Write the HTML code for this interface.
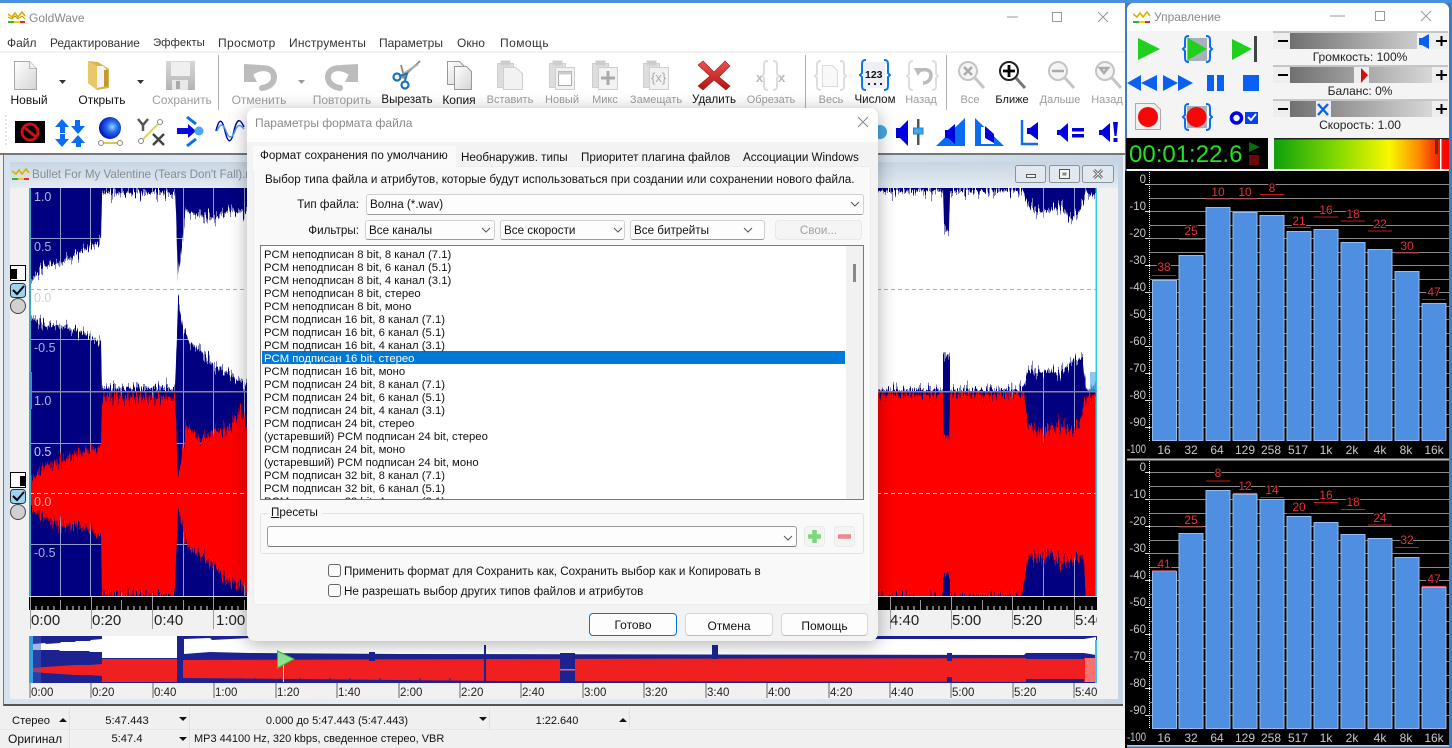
<!DOCTYPE html>
<html lang="ru">
<head>
<meta charset="utf-8">
<title>GoldWave</title>
<style>
html,body{margin:0;padding:0;width:1452px;height:748px;overflow:hidden;background:#4a8fd8;font-family:"Liberation Sans",sans-serif;font-size:12px;color:#111}
.a{position:absolute}
.t{position:absolute;white-space:nowrap;line-height:14px;height:14px}
.c{transform:translateX(-50%)}
.r{transform:translateX(-100%)}
.g{color:#9c9c9c}
svg{position:absolute;overflow:hidden;display:block}
.combo{position:absolute;background:#fdfdfd;border:1px solid #d0d0d0;border-bottom-color:#9a9a9a;border-radius:3px;box-sizing:border-box}
.btn{position:absolute;background:#fdfdfd;border:1px solid #d6d6d6;border-bottom-color:#bcbcbc;border-radius:4px;box-sizing:border-box;text-align:center;line-height:24px}
.li{position:absolute;left:3px;white-space:nowrap;line-height:13px;height:13px;font-size:11.3px}
.chk{position:absolute;width:13px;height:13px;border:1px solid #666;border-radius:3px;background:#fbfbfb;box-sizing:border-box}
.d{font-size:11.65px}
</style>
</head>
<body>
<!-- main window -->
<div class="a" style="left:0;top:3px;width:1125px;height:745px;background:#fff"></div>
<svg style="left:8px;top:11px" width="18" height="13" viewBox="0 0 18 13"><path d="M0 3l4 3 3-4 3 4 4-5 3 4" fill="none" stroke="#d8b000" stroke-width="1.6"/><path d="M0 6l4 2 3-3 3 3 4-3 3 3" fill="none" stroke="#b89800" stroke-width="1"/><rect x="0" y="10" width="6" height="2" fill="#2fb52f"/><rect x="6" y="10" width="6" height="2" fill="#e8d020"/><rect x="12" y="10" width="5" height="2" fill="#e03020"/></svg>
<span class="t" style="left:29px;top:11px;color:#888">GoldWave</span>
<svg style="left:1000px;top:8px" width="120" height="18" viewBox="0 0 120 18"><path d="M7 9h11" stroke="#999" fill="none"/><rect x="52.500" y="4.500" width="9" height="9" fill="none" stroke="#999"/><path d="M98 4l10 10M108 4l-10 10" stroke="#999" fill="none"/></svg>
<div class="a" style="left:0;top:34px;width:1125px;height:18px;background:#fff"></div>
<span class="t" style="left:7px;top:36px;color:#333">Файл</span>
<span class="t" style="left:50px;top:36px;color:#333;font-size:11.8px">Редактирование</span>
<span class="t" style="left:153px;top:36px;color:#333;font-size:11.4px">Эффекты</span>
<span class="t" style="left:218px;top:36px;color:#333;letter-spacing:.35px">Просмотр</span>
<span class="t" style="left:289px;top:36px;color:#333;letter-spacing:.2px">Инструменты</span>
<span class="t" style="left:379px;top:36px;color:#333">Параметры</span>
<span class="t" style="left:457px;top:36px;color:#333">Окно</span>
<span class="t" style="left:500px;top:36px;color:#333;letter-spacing:.45px">Помощь</span>
<div class="a" style="left:0;top:51px;width:1125px;height:2px;background:#f2f2f2"></div>

<!-- toolbars -->
<svg style="left:0;top:53px" width="1125" height="102" viewBox="0 53 1125 102">
<defs>
<linearGradient id="dg" x1="0" y1="0" x2="1" y2="1"><stop offset="0" stop-color="#fff"/><stop offset="1" stop-color="#d4d4d4"/></linearGradient>
<linearGradient id="gd" x1="0" y1="0" x2="0" y2="1"><stop offset="0" stop-color="#d8d8d8"/><stop offset="1" stop-color="#b4b4b4"/></linearGradient>
<linearGradient id="rx" x1="0" y1="0" x2="0" y2="1"><stop offset="0" stop-color="#ef5050"/><stop offset="1" stop-color="#b01414"/></linearGradient>
<radialGradient id="ball" cx=".6" cy=".45" r=".6"><stop offset="0" stop-color="#8fd8ff"/><stop offset=".4" stop-color="#2a6cf0"/><stop offset="1" stop-color="#0010b0"/></radialGradient>
</defs>
<path d="M218.500 55v55M805.500 55v55M946.500 55v55" stroke="#b0b0b0"/>
<path d="M59 80h7l-3.500 4zM137 80h7l-3.500 4z" fill="#333"/>
<path d="M298 80h7l-3.500 4z" fill="#999"/>
<!-- new -->
<path d="M14.500 61.500h15l7 7v21h-22z" fill="url(#dg)" stroke="#a8a8a8"/><path d="M29.500 61.500v7h7" fill="#eee" stroke="#bbb"/>
<!-- open -->
<path d="M88 61l10 1 11 7v19l-12 2-9-7z" fill="#d9b44a"/><path d="M88 61l9 5v24l-9-7z" fill="#e8c868"/><path d="M97 66h6l3 3v17l-9 2z" fill="#f4f4f4"/><path d="M104 70h4v16l-4 1z" fill="#c09a30"/>
<!-- save -->
<path d="M166 61h29v29h-29z" fill="url(#gd)"/><rect x="171" y="62" width="19" height="14" fill="#efefef"/><rect x="172" y="80" width="16" height="10" fill="#e8e8e8"/><rect x="176" y="81" width="4" height="8" fill="#aaa"/>
<!-- undo/redo -->
<path d="M252 72c10-7 22-4 22 5 0 7-6 10-12 11" fill="none" stroke="#bcbcbc" stroke-width="6" stroke-linecap="round"/><path d="M244 64l17 1-3 4-5 5 4 8-13 0z" fill="#bcbcbc"/>
<g transform="translate(602,0) scale(-1,1)"><path d="M252 72c10-7 22-4 22 5 0 7-6 10-12 11" fill="none" stroke="#bcbcbc" stroke-width="6" stroke-linecap="round"/><path d="M244 64l17 1-3 4-5 5 4 8-13 0z" fill="#bcbcbc"/></g>
<!-- scissors -->
<path d="M402 78l18-17M405 80l-4-15" stroke="#888" stroke-width="1.800" fill="none"/><path d="M399 77l19-13" stroke="#aaa" stroke-width="2" fill="none"/>
<circle cx="397" cy="77" r="3.500" fill="none" stroke="#1a6fc0" stroke-width="2.200"/><circle cx="405" cy="85" r="3.500" fill="none" stroke="#1a6fc0" stroke-width="2.200"/><path d="M400 76l8-3M405 81l2-7" stroke="#1a6fc0" stroke-width="1.800"/>
<!-- copy -->
<path d="M447.500 61.500h12l5 5v18h-17z" fill="url(#dg)" stroke="#999"/><path d="M454.500 66.500h12l5 5v18h-17z" fill="url(#dg)" stroke="#999"/>
<!-- paste family -->
<g fill="#ddd" stroke="#cfcfcf">
<path d="M497.500 63.500h16v24h-16z"/><path d="M503.500 67.500h12l7 6v16h-19z" fill="#f2f2f2"/><path d="M501 61h9v4h-9z" fill="#ccc"/>
<path d="M549.500 63.500h16v24h-16z"/><path d="M555.500 67.500h19v22h-19z" fill="#f2f2f2"/><path d="M553 61h9v4h-9z" fill="#ccc"/><path d="M558.500 71.500h13v14h-13z" fill="#fff" stroke="#aaa"/><path d="M558.500 71.500h13v3h-13z" fill="#ccc" stroke="none"/>
<path d="M592.500 63.500h16v24h-16z"/><path d="M598.500 67.500h19v22h-19z" fill="#f2f2f2"/><path d="M596 61h9v4h-9z" fill="#ccc"/>
<path d="M643.500 63.500h16v24h-16z"/><path d="M649.500 67.500h19v22h-19z" fill="#f2f2f2"/><path d="M647 61h9v4h-9z" fill="#ccc"/>
</g>
<path d="M608 71v14M601 78h14" stroke="#aaa" stroke-width="3" fill="none"/>
<text x="651" y="82" font-size="13" fill="#aaa" font-family="Liberation Sans">{x}</text>
<!-- delete -->
<path d="M703 61l11 11 11-11 5 5-11 11 11 9-4 4-12-10-11 10-5-4 12-10-12-11z" fill="url(#rx)" stroke="#a01818" stroke-width=".6"/>
<!-- trim -->
<text x="756" y="82" font-size="13" font-weight="bold" fill="#bbb" font-family="Liberation Sans">x</text><text x="778" y="82" font-size="13" font-weight="bold" fill="#bbb" font-family="Liberation Sans">x</text>
<path d="M768 61c-4 0-4 2-4 6v7l-2 2 2 2v6c0 4 0 6 4 6M773 61c4 0 4 2 4 6v7l2 2-2 2v6c0 4 0 6-4 6" fill="none" stroke="#ddd" stroke-width="2"/>
<!-- zoom brace -->
<path d="M821 61c-4 0-4 2-4 6v7l-2 2 2 2v6c0 4 0 6 4 6M840 61c4 0 4 2 4 6v7l2 2-2 2v6c0 4 0 6-4 6" fill="none" stroke="#ddd" stroke-width="2"/><path d="M822.500 65.500h10l5 5v16h-15z" fill="#f8f8f8" stroke="#ddd"/>
<rect x="863" y="62" width="22" height="26" fill="#eef0f4"/>
<path d="M866 60c-4 0-4 2-4 6v7l-2 2 2 2v7c0 4 0 6 4 6M884 60c4 0 4 2 4 6v7l2 2-2 2v7c0 4 0 6-4 6" fill="none" stroke="#0a78e8" stroke-width="2"/>
<text x="865" y="78" font-size="10.500" font-weight="bold" fill="#111" font-family="Liberation Sans">123</text>
<path d="M868 83h2v2h-2zM874 83h2v2h-2zM880 83h2v2h-2z" fill="#222"/>
<path d="M913 61c-4 0-4 2-4 6v7l-2 2 2 2v6c0 4 0 6 4 6M932 61c4 0 4 2 4 6v7l2 2-2 2v6c0 4 0 6-4 6" fill="none" stroke="#ddd" stroke-width="2"/>
<path d="M917 72c6-4 14-3 14 3 0 5-4 8-8 8" fill="none" stroke="#bbb" stroke-width="3.500"/><path d="M914 68h9l-5 8z" fill="#bbb"/>
<!-- magnifiers -->
<g fill="#f4f4f4" stroke="#c4c4c4" stroke-width="2"><circle cx="968" cy="71" r="9"/><circle cx="1058" cy="71" r="9"/><circle cx="1105" cy="71" r="9"/></g>
<circle cx="1009" cy="71" r="9" fill="#fff" stroke="#222" stroke-width="2"/>
<path d="M975 78l9 10M1065 78l9 10M1112 78l9 10" stroke="#c4c4c4" stroke-width="3"/><path d="M1016 78l9 10" stroke="#777" stroke-width="3"/>
<path d="M964 67l8 8M972 67l-8 8M1052 71h12M1100 68h8l-4 5z" stroke="#aaa" stroke-width="2.500" fill="none"/>
<path d="M1003 71h12M1009 65v12" stroke="#000" stroke-width="2.800"/>
<!-- row 2 -->
<path d="M6 115v30" stroke="#ccc" stroke-dasharray="2 2"/>
<rect x="15" y="121" width="30" height="22" fill="#000"/><circle cx="30" cy="132" r="8" fill="none" stroke="#d01010" stroke-width="2.800"/><path d="M24 127l12 10" stroke="#d01010" stroke-width="2.800"/>
<path d="M62 119l7 8h-4v6h-5v-6h-5zM78 134l-7-8h4v-6h5v6h5z" fill="#0a6cf0"/><path d="M62 147l7-8h-4v-5h-5v5h-5zM78 135l7 8h-4v4h-5v-4h-5z" fill="#0a6cf0"/>
<circle cx="110" cy="128" r="11" fill="url(#ball)"/><path d="M102 143h15" stroke="#d8c850" stroke-width="2"/><circle cx="101" cy="143" r="2.500" fill="#fff" stroke="#888"/><circle cx="120" cy="143" r="2.500" fill="#fff" stroke="#888"/>
<path d="M138 119l5 6 5-6M143 125v6" stroke="#555" stroke-width="2.500" fill="none"/><path d="M143 139l15-15" stroke="#d8d860" stroke-width="2"/><circle cx="141" cy="141" r="2.500" fill="#fff" stroke="#888"/><circle cx="160" cy="122" r="2.500" fill="#fff" stroke="#888"/><path d="M153 134l11 11M164 134l-11 11" stroke="#444" stroke-width="2.500"/>
<path d="M177 128h11v-4l8 7-8 7v-4h-11z" fill="#0a0ae0"/><path d="M187 117l9 7M187 146l9-7" stroke="#0a6cf0" stroke-width="3"/><circle cx="199" cy="131" r="4.500" fill="#4aa8f0"/>
<path d="M216 131c3-13 6-13 9 0s6 13 9 0 6-13 10-4" fill="none" stroke="#0000b0" stroke-width="1.500"/><path d="M217 131c3-8 6-8 9 0s6 8 9 0 6-6 9-2" fill="none" stroke="#40a0f0" stroke-width="1.500"/>
<circle cx="880" cy="132" r="7" fill="#4aa8e8"/>
<path d="M896 128h4l8-8v26l-8-8h-4z" fill="#0000e0"/>
<rect x="917" y="119" width="2.500" height="26" fill="#555"/><rect x="913.500" y="128" width="9.500" height="6" fill="#40a8f0" stroke="#2080d0"/>
<path d="M936 146l29-28v28z" fill="#0a6cf0"/><path d="M945 130h3l7-6v20l-7-6h-3z" fill="#0000e0"/>
<path d="M975 118l29 28h-29z" fill="#0a6cf0"/><path d="M981 127h5l8 10v7h-13z" fill="#fff"/><path d="M985 126l9 8v9l-9-5z" fill="#0000e0"/>
<path d="M1022 120v24h16" fill="none" stroke="#0a6cf0" stroke-width="2.400"/><path d="M1027 128h3l8-6v18l-8-6h-3z" fill="#0000d8"/>
<path d="M1057 130h3l8-7v19l-8-7h-3zM1072 128h12v3.500h-12zM1072 134h12v3.500h-12z" fill="#0000e0"/>
<path d="M1099 130h3l8-7v19l-8-7h-3zM1113 122h5l-1.500 14h-2zM1113.500 138h4v4h-4z" fill="#0000e0"/>
</svg>

<span class="t c" style="left:29px;top:93px">Новый</span>
<span class="t c" style="left:102px;top:93px">Открыть</span>
<span class="t c g" style="left:182px;top:93px">Сохранить</span>
<span class="t c g" style="left:259px;top:93px">Отменить</span>
<span class="t c g" style="left:342px;top:93px">Повторить</span>
<span class="t c" style="left:407px;top:93px;font-size:11.5px">Вырезать</span>
<span class="t c" style="left:459px;top:93px">Копия</span>
<span class="t c g" style="left:510px;top:93px;font-size:11px">Вставить</span>
<span class="t c g" style="left:562px;top:93px;font-size:11px">Новый</span>
<span class="t c g" style="left:605px;top:93px;font-size:11px">Микс</span>
<span class="t c g" style="left:656px;top:93px;font-size:11px">Замещать</span>
<span class="t c" style="left:714px;top:93px;font-size:11.5px">Удалить</span>
<span class="t c g" style="left:771px;top:93px;font-size:11px">Обрезать</span>
<span class="t c g" style="left:831px;top:93px;font-size:11px">Весь</span>
<span class="t c" style="left:875px;top:93px;font-size:11.5px">Числом</span>
<span class="t c g" style="left:921px;top:93px;font-size:11px">Назад</span>
<span class="t c g" style="left:970px;top:93px;font-size:11px">Все</span>
<span class="t c" style="left:1012px;top:93px;font-size:11px">Ближе</span>
<span class="t c g" style="left:1060px;top:93px;font-size:11px">Дальше</span>
<span class="t c g" style="left:1107px;top:93px;font-size:11px">Назад</span>

<!-- child window -->
<div class="a" style="left:0;top:153px;width:1125px;height:553px;background:#f0f0f0"></div>
<div class="a" style="left:0;top:153px;width:1125px;height:2px;background:#777"></div>
<div class="a" style="left:3px;top:155px;width:1120px;height:551px;background:linear-gradient(90deg,#d6e2ee,#e6edf4 30%,#dbe5ef 70%,#c6d5e4);border-left:1px solid #777;border-bottom:2px solid #555;box-sizing:border-box"></div>
<div class="a" style="left:10px;top:162px;width:1108px;height:26px;background:linear-gradient(180deg,#c8d5e2,#e4ebf2)"></div>
<div class="a" style="left:10px;top:188px;width:1108px;height:511px;background:#f1f1f1"></div>
<svg style="left:12px;top:168px" width="18" height="13" viewBox="0 0 18 13"><path d="M0 3l4 3 3-4 3 4 4-5 3 4" fill="none" stroke="#d8b000" stroke-width="1.600"/><rect x="0" y="10" width="6" height="2" fill="#2fb52f"/><rect x="6" y="10" width="6" height="2" fill="#e8d020"/><rect x="12" y="10" width="5" height="2" fill="#e03020"/></svg>
<span class="t" style="left:32px;top:168px;color:#858c94;font-size:11.6px">Bullet For My Valentine (Tears Don't Fall).mp3</span>
<svg style="left:1015px;top:163px" width="102" height="22" viewBox="0 0 102 22">
<g fill="#e2e8ef" stroke="#8a949e"><rect x=".5" y="2.500" width="30" height="17" rx="2"/><rect x="34.500" y="2.500" width="30" height="17" rx="2"/><rect x="67.500" y="2.500" width="31" height="17" rx="2"/></g>
<rect x="11.500" y="11.500" width="9" height="3" fill="#f4f4f4" stroke="#555"/><rect x="44.500" y="6.500" width="10" height="9" fill="#f4f4f4" stroke="#555"/><rect x="47.500" y="9.500" width="4" height="3" fill="#888"/><path d="M79 7l8 8M87 7l-8 8" stroke="#555" stroke-width="2.800"/><path d="M79 7l8 8M87 7l-8 8" stroke="#eee" stroke-width="1"/>
</svg>

<!-- channel side icons -->
<svg style="left:9px;top:264px" width="19" height="258" viewBox="0 0 19 258">
<rect x="1.500" y="1.500" width="15" height="15" fill="#fff" stroke="#000"/><rect x="2" y="5" width="6" height="10" fill="#000"/>
<rect x="1.500" y="19.500" width="15" height="14" rx="3" fill="#9bd4f0" stroke="#333"/><path d="M4 26l4 4 7-8" fill="none" stroke="#000" stroke-width="2"/>
<circle cx="9" cy="42" r="7.500" fill="#d0d0d0" stroke="#444"/>
<rect x="1.500" y="208.500" width="15" height="15" fill="#fff" stroke="#000"/><rect x="11" y="212" width="5" height="10" fill="#000"/>
<rect x="1.500" y="225.500" width="15" height="14" rx="3" fill="#9bd4f0" stroke="#333"/><path d="M4 232l4 4 7-8" fill="none" stroke="#000" stroke-width="2"/>
<circle cx="9" cy="248" r="7.500" fill="#d0d0d0" stroke="#444"/>
</svg>

<!-- waveform top -->
<svg style="left:29px;top:188px" width="1068" height="203" viewBox="29 188 1068 203">
<defs>
<filter id="j1" x="-5%" y="-25%" width="110%" height="150%" color-interpolation-filters="sRGB">
<feTurbulence type="fractalNoise" baseFrequency="0.6 0.0001" numOctaves="3" seed="4" result="n"/>
<feColorMatrix in="n" type="matrix" values="1 0 0 0 0 0 0 0 0 .5 0 0 0 0 0 0 0 0 0 1" result="m"/>
<feDisplacementMap in="SourceGraphic" in2="m" scale="34" xChannelSelector="G" yChannelSelector="R"/>
</filter>
<filter id="j2" x="-5%" y="-25%" width="110%" height="150%" color-interpolation-filters="sRGB">
<feTurbulence type="fractalNoise" baseFrequency="0.55 0.0001" numOctaves="3" seed="11" result="n"/>
<feColorMatrix in="n" type="matrix" values="1 0 0 0 0 0 0 0 0 .5 0 0 0 0 0 0 0 0 0 1" result="m"/>
<feDisplacementMap in="SourceGraphic" in2="m" scale="36" xChannelSelector="G" yChannelSelector="R"/>
</filter>
</defs>
<rect x="29" y="188" width="1068" height="203" fill="#000080"/>
<path d="M60.500 188v203M90.500 188v203M121.500 188v203M152.500 188v203M183.500 188v203M213.500 188v203M244.500 188v203M1012.500 188v203M1043.500 188v203M1074.500 188v203M29 238.500h1068M29 339.500h1068" stroke="#8c9cc8" fill="none"/>
<polygon filter="url(#j1)" fill="#fff" points="30,282 45,265 60,264 75,255 90,247 101,240 102,193 175,193 176,212 178,280 183,236 186,210 200,216 215,218 230,210 247,214 878,191 943,191 944,228 949,232 950,191 1024,191 1028,206 1040,212 1050,210 1060,206 1072,220 1080,210 1086,192 1096,198 1096,386 1086,390 1083,358 1073,360 1060,374 1050,370 1040,372 1028,370 1022,390 950,390 950,354 943,356 943,390 878,390 247,386 230,374 215,366 200,350 190,342 183,328 178,300 176,362 175,388 102,388 101,342 90,336 75,330 60,326 45,325 30,316"/>
<path d="M30 289.500h1066" stroke="#b0b0b0" stroke-dasharray="4 3" fill="none"/>
<rect x="29" y="188" width="2" height="203" fill="#3aa8c8"/><rect x="29" y="372" width="3" height="19" fill="#3b8fd0"/><rect x="1095.500" y="188" width="1.500" height="203" fill="#30c8e0"/>
<rect x="1090" y="372" width="6" height="19" fill="#58b0e8" opacity=".7"/>
<g font-family="Liberation Sans" font-size="12.500"><text x="34" y="201" fill="#b0b8e0">1.0</text><text x="34" y="251" fill="#a8b0dc">0.5</text><text x="34" y="302" fill="#d0d0d0">0.0</text><text x="34" y="352" fill="#a8b0dc">-0.5</text></g>
</svg>
<!-- waveform bottom -->
<svg style="left:29px;top:391px" width="1068" height="206" viewBox="29 391 1068 206">
<rect x="29" y="391" width="1068" height="206" fill="#000080"/>
<path d="M60.500 391v205M90.500 391v205M121.500 391v205M152.500 391v205M183.500 391v205M213.500 391v205M244.500 391v205M1012.500 391v205M1043.500 391v205M1074.500 391v205M29 443.500h1068M29 544.500h1068" stroke="#8c9cc8" fill="none"/>
<polygon filter="url(#j2)" fill="#ff0000" points="30,482 45,466 60,462 75,455 90,450 101,448 102,396 175,398 176,420 178,480 183,450 186,425 200,440 215,432 230,428 240,410 247,425 878,394 943,394 944,436 949,438 950,394 1024,394 1028,425 1040,434 1050,428 1060,425 1072,432 1080,422 1086,396 1096,396 1096,598 1086,598 1083,556 1073,560 1060,564 1050,552 1040,560 1028,556 1022,598 950,598 950,574 943,574 943,598 878,598 247,590 230,582 215,568 200,554 190,550 183,532 178,508 176,560 175,596 102,596 101,538 90,530 75,526 60,526 45,518 30,510"/>
<rect x="29" y="596" width="1068" height="1.500" fill="#d8d8e0"/>
<path d="M30 493.500h1066" stroke="#ffdcdc" stroke-dasharray="4 3" fill="none"/>
<rect x="29" y="391" width="2" height="205" fill="#3aa8c8"/><rect x="29" y="391" width="3" height="18" fill="#3b8fd0"/><rect x="1095.500" y="391" width="1.500" height="205" fill="#30c8e0"/>
<rect x="29" y="390.500" width="1068" height="2" fill="#888"/>
<g font-family="Liberation Sans" font-size="12.500"><text x="34" y="405" fill="#b0b8e0">1.0</text><text x="34" y="456" fill="#dcc8d8">0.5</text><text x="34" y="506" fill="#ffb8b8">0.0</text><text x="34" y="557" fill="#a8b0dc">-0.5</text></g>
</svg>
<!-- timeline -->
<div class="a" style="left:29px;top:597px;width:1068px;height:13px;background:#000"></div>
<svg style="left:29px;top:597px" width="1068" height="35" viewBox="29 597 1068 35">
<path d="M30.500 597v32M60.500 600v10M91.500 597v32M121.500 600v10M152.500 597v32M183.500 600v10M213.500 597v32M244.500 600v10M890.500 597v32M920.500 600v10M951.500 597v32M982.500 600v10M1012.500 597v32M1043.500 600v10M1074.500 597v32" stroke="#999" fill="none"/>
<path d="M36 606v4M42 606v4M48 606v4M54 606v4M67 606v4M73 606v4M79 606v4M85 606v4M97 606v4M103 606v4M109 606v4M115 606v4M128 606v4M134 606v4M140 606v4M146 606v4M158 606v4M164 606v4M170 606v4M176 606v4M189 606v4M195 606v4M201 606v4M207 606v4M220 606v4M226 606v4M232 606v4M238 606v4M896 606v4M902 606v4M908 606v4M914 606v4M927 606v4M933 606v4M939 606v4M945 606v4M957 606v4M963 606v4M969 606v4M975 606v4M988 606v4M994 606v4M1000 606v4M1006 606v4M1018 606v4M1024 606v4M1030 606v4M1036 606v4M1049 606v4M1055 606v4M1061 606v4M1067 606v4M1080 606v4M1086 606v4M1092 606v4" stroke="#ddd" fill="none"/>
<g font-family="Liberation Sans" font-size="15" fill="#222"><text x="31" y="625">0:00</text><text x="92" y="625">0:20</text><text x="154" y="625">0:40</text><text x="216" y="625">1:00</text><text x="890" y="625">4:40</text><text x="952" y="625">5:00</text><text x="1013" y="625">5:20</text><text x="1075" y="625">5:40</text></g>
</svg>
<!-- overview -->
<svg style="left:29px;top:636px" width="1068" height="47" viewBox="29 636 1068 47">
<rect x="29" y="636" width="1068" height="47" fill="#1c2390"/>
<polygon fill="#fff" points="33,644 45,643 46,644 60,643 61,642 75,642 76,641 90,641 91,640 102,639 102,652 90,652 89,651 60,651 59,650 33,650"/>
<polygon fill="#fff" points="184,639 210,638 212,640 250,638 400,639 1026,639 1084,639 1096,637 1096,655 1084,653 1026,653 1024,655 400,654 250,653 210,652 184,654"/>
<rect x="102" y="636" width="75" height="22" fill="#fff"/>
<polygon fill="#f02020" points="33,668 45,667 60,666 75,665 90,665 102,664 102,676 90,675 75,675 60,674 45,673 33,672"/>
<polygon fill="#f02020" points="102,659 177,659 177,682 102,682"/>
<polygon fill="#f02020" points="183,660 500,659 1096,658 1096,682 500,681 183,678"/>
<path d="M190 678v3M205 678v4M222 678v3M240 678v3M255 678v3M280 678v4M300 678v3M330 678v3M350 678v4M380 678v3M420 678v3M450 678v4" stroke="#1c2390" fill="none"/>
<rect x="560" y="653" width="15" height="30" fill="#1c2390"/><rect x="560" y="669" width="15" height="1.500" fill="#f06060"/>
<rect x="712" y="645" width="6" height="14" fill="#1c2390"/>
<rect x="947" y="653" width="5" height="8" fill="#1c2390"/><rect x="947" y="677" width="5" height="5" fill="#1c2390"/>
<rect x="1026" y="654" width="58" height="5" fill="#1c2390"/><rect x="1026" y="679" width="58" height="3" fill="#1c2390"/><rect x="1026" y="636" width="58" height="3" fill="#1c2390"/>
<rect x="369" y="652" width="6" height="9" fill="#1c2390"/><rect x="484" y="645" width="2" height="37" fill="#1c2390"/>
<rect x="1085" y="658" width="11" height="24" fill="#f87070"/>
<rect x="29" y="636" width="4" height="47" fill="#3aa0dc"/><rect x="33" y="636" width="8" height="47" fill="#3a60c8" opacity=".45"/><rect x="1095" y="640" width="2" height="43" fill="#40c0f0"/>
<path d="M283.500 664v18" stroke="#ffe0a0"/><polygon points="277.500,651 294,659 277.500,668" fill="#90e490" stroke="#34c034"/>
</svg>
<svg style="left:29px;top:683px" width="1068" height="16" viewBox="29 683 1068 16">
<path d="M30 683v15M91 683v15M153 683v15M214 683v15M276 683v15M337 683v15M399 683v15M460 683v15M521 683v15M583 683v15M644 683v15M706 683v15M767 683v15M829 683v15M890 683v15M951 683v15M1013 683v15M1074 683v15" stroke="#666" fill="none" stroke-width="1"/>
<g font-family="Liberation Sans" font-size="11.500" fill="#222"><text x="31" y="696">0:00</text><text x="92" y="696">0:20</text><text x="154" y="696">0:40</text><text x="215" y="696">1:00</text><text x="277" y="696">1:20</text><text x="338" y="696">1:40</text><text x="400" y="696">2:00</text><text x="461" y="696">2:20</text><text x="522" y="696">2:40</text><text x="584" y="696">3:00</text><text x="645" y="696">3:20</text><text x="707" y="696">3:40</text><text x="768" y="696">4:00</text><text x="830" y="696">4:20</text><text x="891" y="696">4:40</text><text x="952" y="696">5:00</text><text x="1014" y="696">5:20</text><text x="1075" y="696">5:40</text></g>
</svg>

<!-- status bar -->
<div class="a" style="left:0;top:706px;width:1125px;height:42px;background:#f0f0f0"></div>
<div class="a" style="left:0;top:729px;width:1125px;height:1px;background:#e6e6e6"></div>
<div class="a" style="left:69px;top:709px;width:1px;height:39px;background:#e0e0e0"></div>
<div class="a" style="left:189px;top:709px;width:1px;height:39px;background:#e0e0e0"></div>
<div class="a" style="left:489px;top:709px;width:1px;height:20px;background:#e0e0e0"></div>
<div class="a" style="left:629px;top:709px;width:1px;height:20px;background:#e0e0e0"></div>
<span class="t" style="left:12px;top:714px;font-size:11.2px">Стерео</span>
<span class="t c" style="left:127px;top:714px;font-size:11.2px">5:47.443</span>
<span class="t c" style="left:337px;top:714px;font-size:11px">0.000 до 5:47.443 (5:47.443)</span>
<span class="t c" style="left:557px;top:714px;font-size:11px">1:22.640</span>
<span class="t" style="left:8px;top:732px">Оригинал</span>
<span class="t c" style="left:127px;top:732px;font-size:11.2px">5:47.4</span>
<span class="t" style="left:194px;top:732px;font-size:11px">MP3 44100 Hz, 320 kbps, сведенное стерео, VBR</span>
<svg style="left:0;top:706px" width="640" height="42" viewBox="0 706 640 42"><path d="M59 722l4-4 4 4zM179 717h8l-4 4zM479 717h8l-4 4zM619 722l4-4 4 4zM179 737h8l-4 4z" fill="#111"/></svg>

<!-- dialog -->
<div class="a" style="left:247px;top:108px;width:631px;height:533px;background:#f3f3f3;border-radius:8px;box-shadow:0 3px 18px rgba(0,0,0,.32);overflow:hidden">
 <div class="a" style="left:0;top:0;width:631px;height:34px;background:#fff"></div>
 <span class="t" style="left:8px;top:8px;color:#8a8a8a">Параметры формата файла</span>
 <svg style="left:610px;top:8px" width="12" height="12" viewBox="0 0 12 12"><path d="M1 1l10 10M11 1L1 11" stroke="#888" fill="none"/></svg>
 <div class="a" style="left:6px;top:58px;width:618px;height:439px;background:#f9f9f9;border:1px solid #ededed;box-sizing:border-box;border-radius:3px"></div>
 <div class="a" style="left:6px;top:38px;width:203px;height:24px;background:#fafafa"></div>
 <span class="t d" style="left:13px;top:41px">Формат сохранения по умолчанию</span>
 <span class="t d" style="left:214px;top:43px">Необнаружив. типы</span>
 <span class="t d" style="left:334px;top:43px">Приоритет плагина файлов</span>
 <span class="t d" style="left:496px;top:43px">Ассоциации Windows</span>
 <span class="t d" style="left:18px;top:65px">Выбор типа файла и атрибутов, которые будут использоваться при создании или сохранении нового файла.</span>
 <span class="t r d" style="left:112px;top:90px">Тип файла:</span>
 <div class="combo" style="left:119px;top:86px;width:498px;height:21px"></div>
 <span class="t d" style="left:123px;top:90px">Волна (*.wav)</span>
 <span class="t r d" style="left:112px;top:116px">Фильтры:</span>
 <div class="combo" style="left:118px;top:112px;width:130px;height:20px"></div>
 <span class="t d" style="left:122px;top:116px">Все каналы</span>
 <div class="combo" style="left:253px;top:112px;width:125px;height:20px"></div>
 <span class="t d" style="left:257px;top:116px">Все скорости</span>
 <div class="combo" style="left:383px;top:112px;width:135px;height:20px"></div>
 <span class="t d" style="left:387px;top:116px">Все битрейты</span>
 <div class="btn d" style="left:528px;top:112px;width:87px;height:20px;background:#f5f5f5;border-color:#e8e8e8;line-height:20px;color:#a0a0a0">Свои...</div>
 <svg style="left:0;top:0" width="631" height="533" viewBox="0 0 631 533"><path d="M604 94l4 4 4-4M235 120l4 4 4-4M367 120l4 4 4-4M497 120l4 4 4-4" fill="none" stroke="#555"/></svg>
 <!-- list -->
 <div class="a" style="left:13px;top:137px;width:604px;height:255px;background:#fff;border:1px solid #7a7a7a;box-sizing:border-box;overflow:hidden">
  <div class="a" style="left:585px;top:0;width:18px;height:254px;background:#f1f1f1"></div>
  <div class="a" style="left:592px;top:18px;width:3px;height:18px;background:#8a8a8a"></div>
  <div class="a" style="left:1px;top:105px;width:583px;height:13px;background:#0078d7"></div>
  <span class="li" style="top:3px">PCM неподписан 8 bit, 8 канал (7.1)</span>
  <span class="li" style="top:16px">PCM неподписан 8 bit, 6 канал (5.1)</span>
  <span class="li" style="top:29px">PCM неподписан 8 bit, 4 канал (3.1)</span>
  <span class="li" style="top:42px">PCM неподписан 8 bit, стерео</span>
  <span class="li" style="top:55px">PCM неподписан 8 bit, моно</span>
  <span class="li" style="top:68px">PCM подписан 16 bit, 8 канал (7.1)</span>
  <span class="li" style="top:81px">PCM подписан 16 bit, 6 канал (5.1)</span>
  <span class="li" style="top:94px">PCM подписан 16 bit, 4 канал (3.1)</span>
  <span class="li" style="top:107px;color:#fff">PCM подписан 16 bit, стерео</span>
  <span class="li" style="top:120px">PCM подписан 16 bit, моно</span>
  <span class="li" style="top:133px">PCM подписан 24 bit, 8 канал (7.1)</span>
  <span class="li" style="top:146px">PCM подписан 24 bit, 6 канал (5.1)</span>
  <span class="li" style="top:159px">PCM подписан 24 bit, 4 канал (3.1)</span>
  <span class="li" style="top:172px">PCM подписан 24 bit, стерео</span>
  <span class="li" style="top:185px">(устаревший) PCM подписан 24 bit, стерео</span>
  <span class="li" style="top:198px">PCM подписан 24 bit, моно</span>
  <span class="li" style="top:211px">(устаревший) PCM подписан 24 bit, моно</span>
  <span class="li" style="top:224px">PCM подписан 32 bit, 8 канал (7.1)</span>
  <span class="li" style="top:237px">PCM подписан 32 bit, 6 канал (5.1)</span>
  <span class="li" style="top:250px">PCM подписан 32 bit, 4 канал (3.1)</span>
 </div>
 <!-- presets -->
 <div class="a" style="left:13px;top:405px;width:604px;height:41px;border:1px solid #e2e2e2;box-sizing:border-box;border-radius:3px"></div>
 <span class="t d" style="left:20px;top:398px;background:#f9f9f9;padding:0 4px"><u>П</u>ресеты</span>
 <div class="combo" style="left:20px;top:418px;width:530px;height:21px;border-color:#999;border-bottom-color:#777"></div>
 <svg style="left:0;top:0" width="631" height="533" viewBox="0 0 631 533"><path d="M537 428l4 4 4-4" fill="none" stroke="#555"/></svg>
 <div class="btn" style="left:557px;top:418px;width:21px;height:21px;background:#f4f4f4;border-color:#eaeaea"></div>
 <div class="btn" style="left:587px;top:418px;width:21px;height:21px;background:#f4f4f4;border-color:#eaeaea"></div>
 <svg style="left:557px;top:418px" width="51" height="21" viewBox="0 0 51 21"><path d="M10.500 4v13M4 10.500h13" stroke="#7cd87c" stroke-width="4.500"/><path d="M34 10.500h13" stroke="#ea8a90" stroke-width="4.500"/></svg>
 <div class="chk" style="left:81px;top:456px"></div>
 <span class="t d" style="left:97px;top:457px">Применить формат для Сохранить как, Сохранить выбор как и Копировать в</span>
 <div class="chk" style="left:81px;top:476px"></div>
 <span class="t d" style="left:97px;top:477px">Не разрешать выбор других типов файлов и атрибутов</span>
 <div class="btn" style="left:342px;top:505px;width:88px;height:23px;border:1.500px solid #0a74c8;line-height:23px">Готово</div>
 <div class="btn" style="left:438px;top:505px;width:88px;height:23px">Отмена</div>
 <div class="btn" style="left:534px;top:505px;width:87px;height:23px">Помощь</div>
</div>

<!-- right panel -->
<div class="a" style="left:1125px;top:0;width:327px;height:748px;background:#3f7cc0"></div>
<div class="a" style="left:1125px;top:171px;width:2px;height:577px;background:#000"></div>
<div class="a" style="left:1127px;top:3px;width:322px;height:168px;background:#f4f4f4;border-radius:7px 7px 0 0"></div>
<div class="a" style="left:1127px;top:3px;width:322px;height:28px;background:#fff;border-radius:7px 7px 0 0"></div>
<svg style="left:1133px;top:11px" width="18" height="13" viewBox="0 0 18 13"><path d="M0 3l4 3 3-4 3 4 4-5 3 4" fill="none" stroke="#d8b000" stroke-width="1.600"/><rect x="0" y="10" width="6" height="2" fill="#2fb52f"/><rect x="6" y="10" width="6" height="2" fill="#e8d020"/><rect x="12" y="10" width="5" height="2" fill="#e03020"/></svg>
<span class="t" style="left:1154px;top:10px;color:#888">Управление</span>
<svg style="left:1125px;top:0" width="327" height="170" viewBox="1125 0 327 170">
<defs><linearGradient id="sl" x1="0" x2="1" y1="0" y2="0"><stop offset="0" stop-color="#707070"/><stop offset="1" stop-color="#d8d8d8"/></linearGradient>
<linearGradient id="lv" x1="0" x2="1" y1="0" y2="0"><stop offset="0" stop-color="#0ca00c"/><stop offset=".35" stop-color="#80d800"/><stop offset=".66" stop-color="#f8f800"/><stop offset=".83" stop-color="#ff8800"/><stop offset=".96" stop-color="#f01000"/><stop offset="1" stop-color="#ff0000"/></linearGradient></defs>
<path d="M1330 16h15M1421 11l10 10M1431 11l-10 10" stroke="#999" fill="none"/><rect x="1375.500" y="11.500" width="9" height="9" fill="none" stroke="#999"/>
<polygon points="1138,38 1160,49 1138,60" fill="#1fd01f"/>
<rect x="1187" y="38" width="20" height="23" fill="#a8b0bc"/><polygon points="1188,38 1207,49 1188,60" fill="#1fd01f"/>
<path d="M1189 36c-4 0-4 2-4 6v5l-2 2 2 2v5c0 4 0 6 4 6M1206 36c4 0 4 2 4 6v5l2 2-2 2v5c0 4 0 6-4 6" fill="none" stroke="#0a6cf0" stroke-width="2"/>
<polygon points="1232,39 1252,49 1232,60" fill="#1fd01f"/><rect x="1254" y="36" width="3" height="26" fill="#444"/>
<polygon points="1127,83 1141,75 1141,91" fill="#0a60f0"/><polygon points="1141,83 1157,75 1157,91" fill="#0a60f0"/>
<polygon points="1163,75 1178,83 1163,91" fill="#0a60f0"/><polygon points="1178,75 1193,83 1178,91" fill="#0a60f0"/>
<path d="M1207 75h7v16h-7zM1217 75h7v16h-7zM1243 75h16v16h-16z" fill="#0a60f0"/>
<path d="M1135.500 103.500h19l6 6v20h-25z" fill="#f0f0f0" stroke="#aaa"/><circle cx="1148" cy="117" r="10" fill="#f40808"/>
<rect x="1187" y="106" width="20" height="22" fill="#a8b0bc"/><circle cx="1196.500" cy="117" r="10" fill="#f40808"/>
<path d="M1189 104c-4 0-4 2-4 6v5l-2 2 2 2v5c0 4 0 6 4 6M1206 104c4 0 4 2 4 6v5l2 2-2 2v5c0 4 0 6-4 6" fill="none" stroke="#0a6cf0" stroke-width="2"/>
<circle cx="1236.500" cy="118" r="5" fill="none" stroke="#0000e0" stroke-width="3.500"/><rect x="1245" y="112" width="13" height="12" fill="#0a40e8"/><path d="M1248 117l3 3 5-6" fill="none" stroke="#fff" stroke-width="1.800"/>
<!-- sliders -->
<g>
<rect x="1273" y="32" width="175" height="17" fill="#eee"/><rect x="1290" y="33" width="143" height="16" fill="url(#sl)"/>
<rect x="1273" y="66" width="175" height="17" fill="#eee"/><rect x="1290" y="67" width="142" height="16" fill="url(#sl)"/>
<rect x="1273" y="100" width="175" height="17" fill="#eee"/><rect x="1290" y="101" width="142" height="16" fill="url(#sl)"/>
<path d="M1273 32h175M1273 66h175M1273 100h175" stroke="#999" fill="none"/>
<path d="M1278 41h10M1278 75h10M1278 109h10M1436 41h11M1441.500 36v10M1436 75h11M1441.500 70v10M1436 109h11M1441.500 104v10" stroke="#000" stroke-width="2" fill="none"/>
<rect x="1417" y="33" width="16" height="16" fill="#eee"/><path d="M1419 38h3l7-4v15l-7-4h-3z" fill="#0a60e8"/>
<rect x="1354" y="67" width="15" height="16" fill="#eee"/><path d="M1361 68l7 7-7 8z" fill="#d01010"/>
<rect x="1316" y="101" width="15" height="16" fill="#eee"/><path d="M1318 104l10 11M1328 104l-10 11" stroke="#0a60e8" stroke-width="2.400"/>
</g>
<g font-family="Liberation Sans" font-size="12" fill="#222" text-anchor="middle"><text x="1360" y="61">Громкость: 100%</text><text x="1360" y="95">Баланс: 0%</text><text x="1360" y="129">Скорость: 1.00</text></g>
<rect x="1126" y="138" width="142" height="31" fill="#000"/>
<text x="1129" y="162" font-family="Liberation Sans" font-size="24" fill="#22e022">00:01:22.6</text>
<polygon points="1249,142 1260,147 1249,152" fill="#0a6a0a"/><rect x="1249" y="155" width="10" height="10" fill="#6a0a0a"/>
<rect x="1274" y="138" width="175" height="31" fill="url(#lv)"/><rect x="1274" y="138" width="175" height="1.500" fill="#222"/><rect x="1440" y="139" width="1.500" height="30" fill="#fff"/><rect x="1435" y="139" width="3" height="15" fill="#802010"/>
</svg>
<!-- spectrum -->
<svg style="left:1127px;top:171px" width="322" height="577" viewBox="1127 171 322 577">
<rect x="1127" y="171" width="322" height="288" fill="#000"/><rect x="1127" y="459" width="322" height="287" fill="#000"/>
<rect x="1127" y="458.500" width="322" height="2" fill="#bbb"/>
<g stroke="#8a8a8a" fill="none"><path d="M1150 184.500h299M1150 198.500h299M1150 211.500h299M1150 225.500h299M1150 238.500h299M1150 252.500h299M1150 265.500h299M1150 279.500h299M1150 292.500h299M1150 306.500h299M1150 319.500h299M1150 333.500h299M1150 346.500h299M1150 360.500h299M1150 373.500h299M1150 387.500h299M1150 400.500h299M1150 414.500h299M1150 427.500h299"/></g>
<g stroke="#8a8a8a" fill="none" transform="translate(0,288)"><path d="M1150 184.500h299M1150 198.500h299M1150 211.500h299M1150 225.500h299M1150 238.500h299M1150 252.500h299M1150 265.500h299M1150 279.500h299M1150 292.500h299M1150 306.500h299M1150 319.500h299M1150 333.500h299M1150 346.500h299M1150 360.500h299M1150 373.500h299M1150 387.500h299M1150 400.500h299M1150 414.500h299M1150 427.500h299"/></g>
<path d="M1149.500 172v269M1149.500 461v268" stroke="#fff" stroke-dasharray="1 1" fill="none"/>
<path d="M1145 184.500h5M1145 211.500h5M1145 238.500h5M1145 265.500h5M1145 292.500h5M1145 319.500h5M1145 346.500h5M1145 373.500h5M1145 400.500h5M1145 427.500h5M1145 472.500h5M1145 499.500h5M1145 526.500h5M1145 553.500h5M1145 580.500h5M1145 607.500h5M1145 634.500h5M1145 661.500h5M1145 688.500h5M1145 715.500h5" stroke="#ddd" fill="none"/>
<g fill="#4f8fe2" stroke="#93bdec" stroke-width="1">
<rect x="1152.500" y="280.500" width="24" height="160"/><rect x="1179" y="255.500" width="24" height="185"/><rect x="1206" y="207.500" width="24" height="233"/><rect x="1233" y="212.500" width="24" height="228"/><rect x="1260" y="215.500" width="24" height="225"/><rect x="1287" y="231.500" width="24" height="209"/><rect x="1314" y="229.500" width="24" height="211"/><rect x="1341" y="242.500" width="24" height="198"/><rect x="1368" y="249.500" width="24" height="191"/><rect x="1395" y="271.500" width="24" height="169"/><rect x="1422" y="303.500" width="24" height="137"/>
<rect x="1152.500" y="571.500" width="24" height="157"/><rect x="1179" y="533.500" width="24" height="195"/><rect x="1206" y="490.500" width="24" height="238"/><rect x="1233" y="494.500" width="24" height="234"/><rect x="1260" y="499.500" width="24" height="229"/><rect x="1287" y="516.500" width="24" height="212"/><rect x="1314" y="522.500" width="24" height="206"/><rect x="1341" y="534.500" width="24" height="194"/><rect x="1368" y="538.500" width="24" height="190"/><rect x="1395" y="557.500" width="24" height="171"/><rect x="1422" y="587.500" width="24" height="141"/>
</g>
<g font-family="Liberation Sans" font-size="12" fill="#e03434" text-anchor="middle" style="paint-order:stroke" stroke="#000" stroke-width="2.500">
<text x="1164" y="271">38</text><text x="1191" y="235">25</text><text x="1218" y="196">10</text><text x="1245" y="196">10</text><text x="1272" y="192">8</text><text x="1299" y="225">21</text><text x="1326" y="214">16</text><text x="1353" y="218">18</text><text x="1380" y="228">22</text><text x="1407" y="250">30</text><text x="1434" y="296">47</text>
<text x="1164" y="568">41</text><text x="1191" y="524">25</text><text x="1218" y="477">8</text><text x="1245" y="490">12</text><text x="1272" y="494">14</text><text x="1299" y="511">20</text><text x="1326" y="499">16</text><text x="1353" y="506">18</text><text x="1380" y="522">24</text><text x="1407" y="544">32</text><text x="1434" y="583">47</text>
</g>
<path d="M1152 275.500h24M1179 239.500h24M1206 199h24M1233 199h24M1260 194.500h24M1287 227.500h24M1314 217h24M1341 221h24M1368 231h24M1395 253h24M1422 299.500h24M1179 527h24M1206 481h24M1260 497.500h24M1287 513.500h24M1314 502.500h24M1341 509.500h24M1368 525h24M1395 547.500h24" stroke="#c81818" fill="none"/>
<path d="M1152 571h24M1233 493.500h24M1422 586.500h24" stroke="#f05060" fill="none" stroke-width="1.200"/>
<g font-family="Liberation Sans" font-size="11.500" fill="#c8c8c8" text-anchor="end">
<text x="1146" y="183">0</text><text x="1146" y="210">-10</text><text x="1146" y="237">-20</text><text x="1146" y="264">-30</text><text x="1146" y="291">-40</text><text x="1146" y="318">-50</text><text x="1146" y="345">-60</text><text x="1146" y="372">-70</text><text x="1146" y="399">-80</text><text x="1146" y="426">-90</text>
<text x="1146" y="471">0</text><text x="1146" y="498">-10</text><text x="1146" y="525">-20</text><text x="1146" y="552">-30</text><text x="1146" y="579">-40</text><text x="1146" y="606">-50</text><text x="1146" y="633">-60</text><text x="1146" y="660">-70</text><text x="1146" y="687">-80</text><text x="1146" y="714">-90</text>
</g>
<g font-family="Liberation Sans" font-size="11.500" fill="#c8c8c8"><text x="1127" y="453" textLength="19" lengthAdjust="spacingAndGlyphs">-100</text><text x="1127" y="741" textLength="19" lengthAdjust="spacingAndGlyphs">-100</text></g>
<g font-family="Liberation Sans" font-size="12" fill="#c8c8c8" text-anchor="middle">
<text x="1164" y="454">16</text><text x="1191" y="454">32</text><text x="1217" y="454">64</text><text x="1245" y="454">129</text><text x="1271" y="454">258</text><text x="1298" y="454">517</text><text x="1326" y="454">1k</text><text x="1352" y="454">2k</text><text x="1380" y="454">4k</text><text x="1406" y="454">8k</text><text x="1434" y="454">16k</text>
<text x="1164" y="742">16</text><text x="1191" y="742">32</text><text x="1217" y="742">64</text><text x="1245" y="742">129</text><text x="1271" y="742">258</text><text x="1298" y="742">517</text><text x="1326" y="742">1k</text><text x="1352" y="742">2k</text><text x="1380" y="742">4k</text><text x="1406" y="742">8k</text><text x="1434" y="742">16k</text>
</g>
<rect x="1127" y="745" width="322" height="1.500" fill="#ccc"/>
</svg>
<div class="a" style="left:0;top:0;width:1452px;height:3px;background:#4a90d9"></div>
</body>
</html>
